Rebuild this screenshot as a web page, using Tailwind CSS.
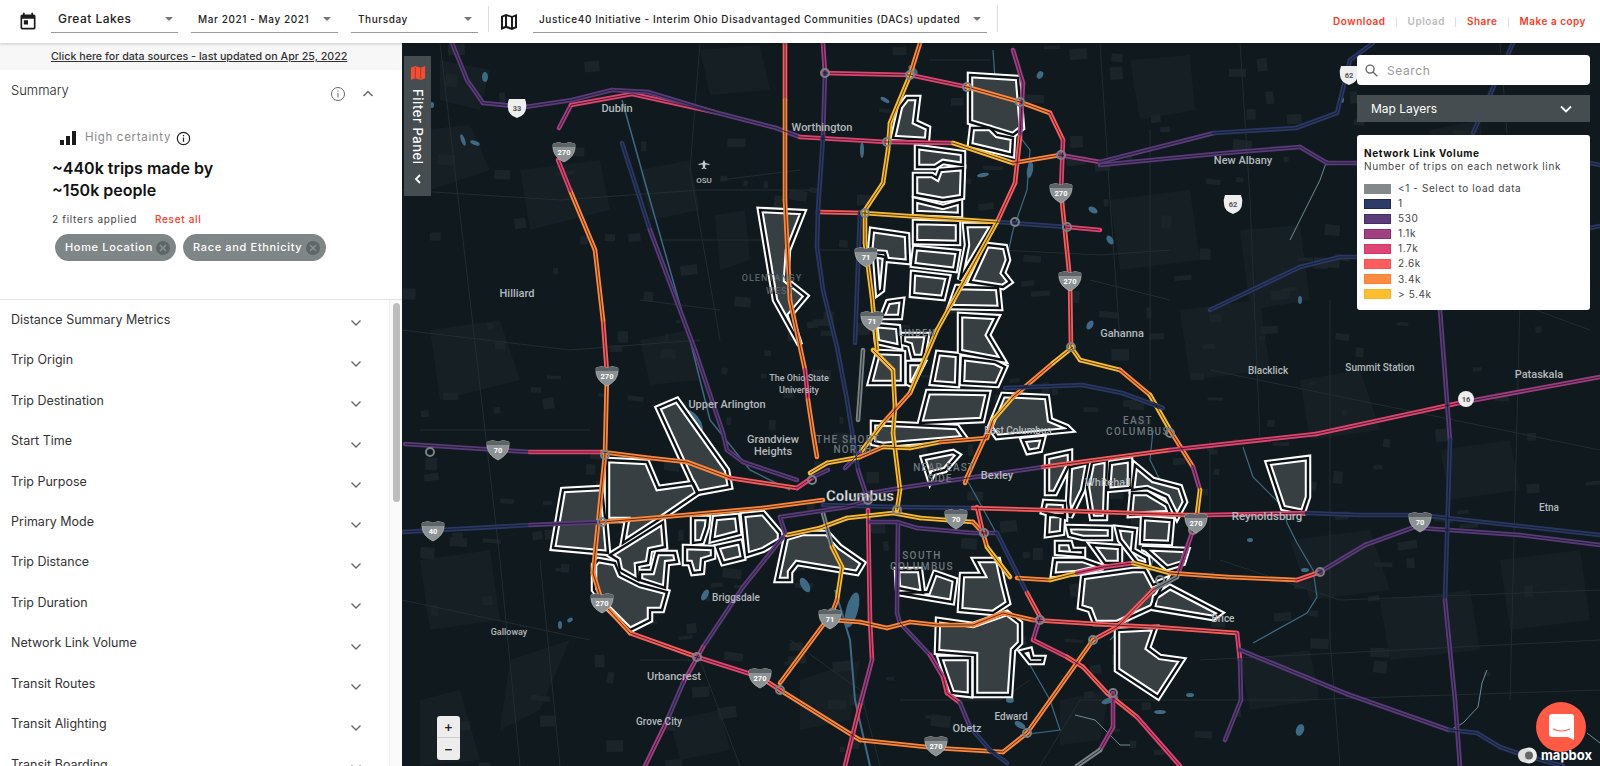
<!DOCTYPE html>
<html lang="en">
<head>
<meta charset="UTF-8">
<title>Replica</title>
<script src="https://cdn.jsdelivr.net/npm/@tailwindcss/browser@4"></script>
</head>
<body class="h-[766px] w-[1600px] overflow-hidden bg-white font-['Inter','Liberation_Sans',sans-serif] text-[#222]">
<header class="relative z-10 flex h-[43px] items-center bg-white text-[10px] font-medium tracking-[0.058em] shadow-[0_1px_3px_rgba(0,0,0,0.2)]">
  <svg class="ml-[18px] h-[20px] w-[20px]" viewBox="0 0 24 24" fill="#1a1a1a"><path d="M19 3h-1V1h-2v2H8V1H6v2H5C3.9 3 3 3.900 3 5v14c0 1.100.9 2 2 2h14c1.100 0 2-.9 2-2V5c0-1.100-.9-2-2-2zm0 16H5V8h14v11zM7 10h5v5H7z"/></svg>
  <div class="ml-[13px] flex h-[33px] w-[127px] items-center justify-between self-start border-b border-[#999] pl-[7px] pr-[5px] text-[12px] tracking-[0.04em]"><span class="mt-[6px]">Great Lakes</span><svg class="mt-[6px] h-[4px] w-[8px]" viewBox="0 0 8 4" fill="#777"><path d="M0 0h8L4 4z"/></svg></div>
  <div class="ml-[13px] flex h-[33px] w-[147px] items-center justify-between self-start border-b border-[#999] pl-[7px] pr-[7px]"><span class="mt-[6px]">Mar 2021 - May 2021</span><svg class="mt-[6px] h-[4px] w-[8px]" viewBox="0 0 8 4" fill="#777"><path d="M0 0h8L4 4z"/></svg></div>
  <div class="ml-[13px] flex h-[33px] w-[127px] items-center justify-between self-start border-b border-[#999] pl-[7px] pr-[6px]"><span class="mt-[6px]">Thursday</span><svg class="mt-[6px] h-[4px] w-[8px]" viewBox="0 0 8 4" fill="#777"><path d="M0 0h8L4 4z"/></svg></div>
  <div class="ml-[10px] mt-[6px] h-[26px] w-px self-start bg-[#ddd]"></div>
  <svg class="ml-[11px] h-[18px] w-[18px]" viewBox="0 0 18 18" fill="#1a1a1a"><path d="M1 3l5-2 6 2 5-2v14l-5 2-6-2-5 2z M5 3.500 3 4.300v9.500l2-.8z M7 3.200v9.800l4 1.400V4.600z M13 4.400v9.800l2-.8V3.700z" fill-rule="evenodd"/></svg>
  <div class="ml-[15px] flex h-[33px] w-[454px] items-center justify-between self-start border-b border-[#999] pl-[6px] pr-[6px]"><span class="mt-[6px] whitespace-nowrap">Justice40 Initiative - Interim Ohio Disadvantaged Communities (DACs) updated</span><svg class="mt-[6px] h-[4px] w-[8px]" viewBox="0 0 8 4" fill="#777"><path d="M0 0h8L4 4z"/></svg></div>
  <div class="ml-[10px] mt-[6px] h-[26px] w-px self-start bg-[#ddd]"></div>
  <div class="ml-auto mr-[14px] flex items-center text-[10px] font-semibold tracking-[0.05em] text-[#fb3a22]">
    <span>Download</span><span class="mx-[10.500px] h-[10px] w-px bg-[#ddd]"></span>
    <span class="text-[#bbb]">Upload</span><span class="mx-[10.500px] h-[10px] w-px bg-[#ddd]"></span>
    <span>Share</span><span class="mx-[10.500px] h-[10px] w-px bg-[#ddd]"></span>
    <span>Make a copy</span>
  </div>
</header>

<main class="flex h-[723px]">
  <aside class="flex h-full w-[402px] shrink-0 flex-col overflow-hidden bg-white">
    <div class="h-[27px] shrink-0 bg-[#f7f7f7] pl-[51px] pt-[6px] text-[10.700px] font-medium leading-[16px] text-[#333] underline">Click here for data sources - last updated on Apr 25, 2022</div>
    <section class="relative h-[230px] shrink-0 border-b border-[#e2e2e2]">
      <div class="flex h-[42px] items-center pl-[11px] pr-[28px] text-[13px] font-light text-[#222]">
        <span class="flex-1">Summary</span>
        <svg class="mr-[16px] mt-[6px] h-[16px] w-[16px]" viewBox="0 0 16 16" fill="none" stroke="#666" stroke-width="1"><circle cx="8" cy="8" r="6.500"/><path d="M8 7v4.500M8 4.500v1.200"/></svg>
        <svg class="mt-[6px] h-[10px] w-[12px]" viewBox="0 0 12 10" fill="none" stroke="#666" stroke-width="1.400"><path d="M1.500 7 6 2.500 10.500 7"/></svg>
      </div>
      <div class="ml-[60px] mt-[19px] flex h-[14px] items-center">
        <svg class="h-[14px] w-[16px]" viewBox="0 0 16 14" fill="#1a1a1a"><path d="M0 9h4v5H0zM6 5h4v9H6zM12 0h4v14h-4z"/></svg>
        <span class="ml-[9px] text-[11.500px] tracking-[0.06em] text-[#888]">High certainty</span>
        <svg class="ml-[5px] h-[15px] w-[15px]" viewBox="0 0 16 16" fill="none" stroke="#222" stroke-width="1.300"><circle cx="8" cy="8" r="6.600"/><path d="M8 7v4.500M8 4.300v1.400"/></svg>
      </div>
      <h2 class="ml-[52px] mt-[12px] text-[16px] font-semibold leading-[22px] text-[#111]">~440k trips made by<br>~150k people</h2>
      <div class="ml-[52px] mt-[11px] flex text-[10px] leading-[14px] tracking-[0.07em] text-[#444]">
        <span class="w-[103px]">2 filters applied</span><span class="font-medium text-[#fb3a22]">Reset all</span>
      </div>
      <div class="ml-[55px] mt-[8px] flex gap-[7px] text-[11px] font-medium tracking-[0.06em] text-white">
        <div class="flex h-[27px] w-[121px] items-center justify-between rounded-full bg-[#7f8687] pl-[10px] pr-[6px]">Home Location<span class="flex h-[14px] w-[14px] items-center justify-center rounded-full bg-[#5f6668]"><svg class="h-[8px] w-[8px]" viewBox="0 0 8 8" stroke="#8d9495" stroke-width="1.400"><path d="M1 1l6 6M7 1 1 7"/></svg></span></div>
        <div class="flex h-[27px] w-[143px] items-center justify-between rounded-full bg-[#7f8687] pl-[10px] pr-[6px]">Race and Ethnicity<span class="flex h-[14px] w-[14px] items-center justify-center rounded-full bg-[#5f6668]"><svg class="h-[8px] w-[8px]" viewBox="0 0 8 8" stroke="#8d9495" stroke-width="1.400"><path d="M1 1l6 6M7 1 1 7"/></svg></span></div>
      </div>
    </section>
    <div class="relative min-h-0 flex-1 overflow-hidden pr-[13px] text-[12.500px] text-[#333]">
      <div class="absolute bottom-0 right-0 top-0 w-[13px] border-l border-[#eee] bg-[#fafafa]"><div class="ml-[3px] mt-[3px] h-[199px] w-[7px] rounded-full bg-[#bdbdbd]"></div></div>
      <div id="rows"></div>
    </div>
  </aside>

  <div class="relative h-full flex-1 overflow-hidden bg-[#10191d]">
    <svg class="absolute inset-0 h-full w-full font-['Roboto','Liberation_Sans',sans-serif]" viewBox="402 43 1198 723">
      <defs>
        <g id="is"><path d="M-11-7Q-5-10 0-7Q5-10 11-7C12 3 6 8 0 11C-6 8-12 3-11-7Z" fill="#8c9193" stroke="#c9cccd" stroke-width=".6"/><path d="M-11-7Q-5-10 0-7Q5-10 11-7L11-4H-11Z" fill="#5d6366"/></g>
        <path id="us" d="M-8-9H8Q10-4 9 0Q9 7 0 10Q-9 7-9 0Q-10-4-8-9Z" fill="#eee"/>
      </defs>
      <g id="land"></g><g id="water"></g><g id="dac"></g><g id="roads"></g>
      <g fill="#b4babd" font-size="11" text-anchor="middle" font-weight="500">
        <text x="617" y="112">Dublin</text><text x="822" y="131">Worthington</text><text x="704" y="183" font-size="8">OSU</text>
        <path d="M704 160l1.500 3 4 1v1l-4-.5-.5 3 1.500 1v.8l-2.500-.8-2.500.8v-.8l1.500-1-.5-3-4 .5v-1l4-1z" fill="#c8cdcf"/>
        <text x="1243" y="164">New Albany</text><text x="517" y="297">Hilliard</text><text x="1122" y="337">Gahanna</text>
        <text x="1268" y="374" font-size="10">Blacklick</text><text x="1380" y="371" font-size="10">Summit Station</text><text x="1539" y="378">Pataskala</text>
        <text x="727" y="408" font-size="11">Upper Arlington</text><text x="773" y="443" font-size="11">Grandview</text><text x="773" y="455">Heights</text>
        <text x="799" y="381" font-size="9">The Ohio State</text><text x="799" y="393" font-size="9">University</text>
        <text x="772" y="281" font-size="9" letter-spacing="1" fill="#59636a">OLENTANGY</text><text x="780" y="294" font-size="9" letter-spacing="1" fill="#59636a">WEST</text>
        <text x="917" y="336" font-size="9" letter-spacing="1" fill="#7c8589">LINDEN</text>
        <text x="848" y="443" font-size="10" letter-spacing="1.200" fill="#6f787c">THE SHORT</text><text x="853" y="453" font-size="10" letter-spacing="1.200" fill="#6f787c">NORTH</text>
        <text x="944" y="471" font-size="10" letter-spacing="1" fill="#6f787c">NEAR EAST</text><text x="940" y="482" font-size="10" letter-spacing="1" fill="#6f787c">SIDE</text>
        <text x="1138" y="424" font-size="10" letter-spacing="1.400" fill="#6f787c">EAST</text><text x="1138" y="435" font-size="10" letter-spacing="1.400" fill="#6f787c">COLUMBUS</text>
        <text x="922" y="559" font-size="10" letter-spacing="1.400" fill="#6f787c">SOUTH</text><text x="922" y="570" font-size="10" letter-spacing="1.400" fill="#6f787c">COLUMBUS</text>
        <text x="860" y="501" font-size="15" font-weight="700" fill="#e3e6e7" stroke="#10191d" stroke-width=".3">Columbus</text>
        <text x="997" y="479" font-size="11">Bexley</text><text x="1018" y="434" font-size="10">East Columbus</text><text x="1108" y="486" font-size="11">Whitehall</text>
        <text x="1267" y="520" font-size="11.500">Reynoldsburg</text><text x="1549" y="511" font-size="10">Etna</text><text x="1223" y="622" font-size="10">Brice</text>
        <text x="736" y="601" font-size="10">Briggsdale</text><text x="509" y="635" font-size="9">Galloway</text><text x="674" y="680">Urbancrest</text>
        <text x="659" y="725" font-size="10">Grove City</text><text x="967" y="732" font-size="11">Obetz</text><text x="1011" y="720" font-size="10">Edward</text>
      </g>
      <g id="shields" fill="#fff" font-size="7.500" font-weight="700" text-anchor="middle">
        <use href="#us" x="517" y="108"/><text x="517" y="111" fill="#555">33</text>
        <use href="#us" x="1349" y="75"/><text x="1349" y="78" fill="#555">62</text>
        <use href="#us" x="1233" y="204"/><text x="1233" y="207" fill="#555">62</text>
        <circle cx="1466" cy="399" r="8" fill="#eee"/><text x="1466" y="402" fill="#555">16</text>
        <use href="#is" x="564" y="151"/><text x="564" y="155">270</text>
        <use href="#is" x="607" y="375"/><text x="607" y="379">270</text>
        <use href="#is" x="602" y="602"/><text x="602" y="606">270</text>
        <use href="#is" x="760" y="677"/><text x="760" y="681">270</text>
        <use href="#is" x="936" y="745"/><text x="936" y="749">270</text>
        <use href="#is" x="1061" y="192"/><text x="1061" y="196">270</text>
        <use href="#is" x="1070" y="280"/><text x="1070" y="284">270</text>
        <use href="#is" x="1196" y="522"/><text x="1196" y="526">270</text>
        <use href="#is" x="498" y="449"/><text x="498" y="453">70</text>
        <use href="#is" x="956" y="518"/><text x="956" y="522">70</text>
        <use href="#is" x="1420" y="521"/><text x="1420" y="525">70</text>
        <use href="#is" x="433" y="530"/><text x="433" y="534">40</text>
        <use href="#is" x="830" y="618"/><text x="830" y="622">71</text>
        <use href="#is" x="866" y="256"/><text x="866" y="260">71</text>
        <use href="#is" x="872" y="320"/><text x="872" y="324">71</text>
      </g>
    </svg>

    <!-- filter tab -->
    <div class="absolute left-[2px] top-[13px] flex h-[140px] w-[27px] flex-col items-center bg-[#454d50] pt-[9px] text-white">
      <svg class="h-[16px] w-[16px]" viewBox="0 0 18 18" fill="#fb4a2e"><path d="M1 3l5-2 6 2 5-2v14l-5 2-6-2-5 2z"/><path d="M6 2.500v12M12 3.500v12" stroke="#454d50" stroke-width=".8"/></svg>
      <span class="mt-[8px] text-[13px] font-medium leading-none tracking-[0.04em] [writing-mode:vertical-rl]">Filter Panel</span>
      <svg class="mt-[10px] h-[10px] w-[8px]" viewBox="0 0 8 10" fill="none" stroke="#fff" stroke-width="1.800"><path d="M6 1 2 5l4 4"/></svg>
    </div>

    <!-- right controls -->
    <div class="absolute left-[955px] top-[12px] flex w-[233px] flex-col">
      <div class="flex h-[30px] items-center rounded-[4px] bg-white pl-[8px] pt-[1px] text-[12px] tracking-[0.05em] text-[#999]">
        <svg class="mr-[9px] h-[13px] w-[13px]" viewBox="0 0 14 14" fill="none" stroke="#666" stroke-width="1.500"><circle cx="5.500" cy="5.500" r="4.300"/><path d="m8.800 8.800 4.500 4.500"/></svg>Search
      </div>
      <div class="mt-[10px] flex h-[27px] items-center justify-between bg-[#454d50] pl-[14px] pr-[18px] text-[12px] text-white">Map Layers
        <svg class="h-[8px] w-[12px]" viewBox="0 0 12 8" fill="none" stroke="#fff" stroke-width="1.800"><path d="m1 1.500 5 5 5-5"/></svg>
      </div>
      <div class="mt-[13px] h-[175px] rounded-[3px] bg-white px-[7px] pt-[12px] text-[10px] leading-[13px] tracking-[0.06em] text-[#444]">
        <div class="font-bold text-[#111]">Network Link Volume</div>
        <div class="whitespace-nowrap">Number of trips on each network link</div>
        <div class="mt-[8px] flex flex-col text-[10px] leading-[15.100px]">
          <div class="flex items-center"><span class="mr-[7px] h-[10px] w-[27px] bg-[#83898b]"></span>&lt;1 - Select to load data</div>
          <div class="flex items-center"><span class="mr-[7px] h-[10px] w-[27px] border border-[#1b2758] bg-[#2d3b66]"></span>1</div>
          <div class="flex items-center"><span class="mr-[7px] h-[10px] w-[27px] border border-[#48286f] bg-[#5c3d78]"></span>530</div>
          <div class="flex items-center"><span class="mr-[7px] h-[10px] w-[27px] border border-[#8f2c78] bg-[#a04080]"></span>1.1k</div>
          <div class="flex items-center"><span class="mr-[7px] h-[10px] w-[27px] border border-[#d9356a] bg-[#dc4674]"></span>1.7k</div>
          <div class="flex items-center"><span class="mr-[7px] h-[10px] w-[27px] border border-[#fb5054] bg-[#ff5c60]"></span>2.6k</div>
          <div class="flex items-center"><span class="mr-[7px] h-[10px] w-[27px] border border-[#fb7f35] bg-[#ff8a42]"></span>3.4k</div>
          <div class="flex items-center"><span class="mr-[7px] h-[10px] w-[27px] border border-[#fcb420] bg-[#ffbe30]"></span>&gt; 5.4k</div>
        </div>
      </div>
    </div>

    <!-- zoom -->
    <div class="absolute left-[35px] top-[673px] flex h-[44px] w-[23px] flex-col rounded-[3px] bg-[#ededed] text-center text-[14px] font-medium leading-[22px] text-[#222]">
      <span class="h-[22px] border-b border-[#ccc]">+</span><span class="h-[22px]">−</span>
    </div>

    <!-- chat and logo -->
    <div class="absolute left-[1134px] top-[659px] flex h-[50px] w-[50px] items-center justify-center rounded-full bg-[#ff5a45]">
      <svg class="h-[26px] w-[25px]" viewBox="0 0 25 26"><path d="M3 0h19q3 0 3 3v23l-6-3H3q-3 0-3-3V3q0-3 3-3z" fill="#fff"/><path d="M4 15q8 4 17 0" fill="none" stroke="#ff5a45" stroke-width="1.200"/></svg>
    </div>
    <div class="absolute left-[1116px] top-[704px] flex items-center text-[13px] font-bold leading-none text-white">
      <svg class="mr-[3px] h-[17px] w-[20px]" viewBox="0 0 20 17"><circle cx="11" cy="8.500" r="8" fill="#eee"/><circle cx="7" cy="8.500" r="7" fill="#ddd"/><circle cx="11" cy="8.500" r="4" fill="#666"/></svg>mapbox
    </div>
  </div>
</main>

<script>
  const rowNames = ["Distance Summary Metrics","Trip Origin","Trip Destination","Start Time","Trip Purpose","Primary Mode","Trip Distance","Trip Duration","Network Link Volume","Transit Routes","Transit Alighting","Transit Boarding"];
  document.getElementById("rows").innerHTML = rowNames.map(function(name) {
    return '<div class="flex h-[40.450px] items-center justify-between pl-[11px] pr-[27px]"><span>' + name + '</span><svg class="mt-[6px] h-[8px] w-[12px]" viewBox="0 0 12 8" fill="none" stroke="#666" stroke-width="1.400"><path d="m1.500 1.500 4.500 4.500 4.500-4.500"/></svg></div>';
  }).join("");

  const NS = "http://www.w3.org/2000/svg";
  function add(parent, tag, attrs) {
    const el = document.createElementNS(NS, tag);
    for (const k in attrs) el.setAttribute(k, attrs[k]);
    document.getElementById(parent).appendChild(el);
  }

  // land use blocks and minor streets
  const land = ["440,60 490,70 480,110 440,100","520,170 600,160 610,210 530,230","420,130 470,125 490,170 430,190","640,170 690,160 700,210 650,220","715,215 745,210 750,260 720,270","430,330 500,320 520,380 440,400","640,340 690,330 700,380 650,385","1130,60 1190,55 1195,110 1140,120","1110,200 1190,190 1200,260 1120,270","1240,230 1300,225 1310,300 1250,310","1180,310 1260,300 1270,370 1190,380","1300,380 1360,370 1380,430 1310,440","1440,450 1510,440 1520,490 1450,500","1290,540 1370,530 1390,590 1310,600","1380,600 1470,590 1480,650 1390,660","1240,660 1310,650 1320,700 1250,710","420,560 490,550 500,620 430,630","510,660 570,640 540,710 500,730","420,700 460,690 480,760 420,766","800,680 860,660 850,720 800,730","1060,700 1110,690 1100,740 1060,745","670,720 720,710 730,750 680,760","1500,560 1580,550 1590,620 1510,630","1430,130 1480,120 1490,200 1440,210","700,50 760,45 770,90 710,95"];
  land.forEach(function(p) { add("land", "polygon", { points: p, fill: "#161f23" }); });

  // small scattered built-up blocks, denser toward the city
  let seed = 71;
  function rnd() { seed = (seed * 16807) % 2147483647; return seed / 2147483647; }
  for (let i = 0; i < 420; i++) {
    const x = 402 + rnd() * 1198, y = 43 + rnd() * 723;
    const far = Math.hypot(x - 860, y - 420);
    if (rnd() * 700 < far - 150) continue;
    add("land", "rect", { x: x, y: y, width: 4 + rnd() * 16, height: 3 + rnd() * 10, fill: "#1b2428", transform: "rotate(" + (rnd() * 16 - 8) + " " + x + " " + y + ")" });
  }

  const streets = ["402,190 560,200 700,190 810,190","402,330 570,350 700,340","402,600 590,640","440,43 470,300 500,560 520,766","700,43 690,170 720,340","1100,43 1110,200 1120,340","1240,43 1250,200 1260,440","1330,300 1330,640 1340,766","1400,260 1590,330","1210,370 1600,450","1200,660 1600,640","1040,766 1080,700 1300,700 1600,690","640,660 700,660 740,766","1500,43 1520,300 1510,700","420,430 590,430","900,700 1000,700 1030,680","720,180 800,170","1220,560 1340,600 1600,590","790,640 860,690 880,766","1000,250 1100,255 1170,250","1090,280 1170,300","660,240 770,240","640,300 720,310","820,250 850,250","930,60 990,60","1150,130 1150,380","540,560 560,766","1210,440 1210,560"];
  streets.forEach(function(p) { add("land", "polyline", { points: p, fill: "none", stroke: "#232c30", "stroke-width": 1 }); });

  // rivers and lakes
  const rivers = [["622,100 650,200 690,340 710,420 750,470 790,490","#3f6a85",1.500],["993,50 997,107 1030,150 1027,190 1013,230 1000,290","#3f6a85",1.200],["967,480 982,507 1000,540","#3f6a85",1.200],["1153,430 1150,460 1170,500 1150,570 1130,620 1110,640","#3f6a85",1.200],["1243,447 1253,477 1283,507 1287,523 1297,543 1313,570 1317,597 1307,613 1253,643","#3f6a85",1.200],["835,590 850,640 855,700 870,766","#3f6a85",2],["1030,665 1050,700 1060,730 1020,735","#3f6a85",1.200],["1327,160 1320,180 1310,200 1290,240","#6e8b99",1],["1487,670 1482,683 1478,707 1463,723 1450,730","#6e8b99",1],["1587,733 1600,743","#6e8b99",1],["1075,715 1095,720 1120,745 1130,745","#6e8b99",1]];
  rivers.forEach(function(r) { add("water", "polyline", { points: r[0], fill: "none", stroke: r[1], "stroke-width": r[2] }); });
  const lakes = [[690,423,10,16,-40],[805,585,4,8,-30],[852,610,6,18,15],[485,77,3,5,0],[432,105,2,3,0],[463,140,2,6,-20],[475,143,5,2,20],[913,70,6,3,45],[885,100,5,2,30],[862,150,2,8,0],[983,175,6,2,-10],[1030,170,3,8,10],[1093,210,5,3,30],[1110,240,3,5,-30],[1090,325,3,5,30],[1040,75,3,4,30],[1010,700,4,3,0],[1020,725,6,3,30],[1110,700,9,3,-20],[1160,712,6,2,0],[1190,695,4,2,0],[1250,540,3,2,0],[1342,100,2,3,0],[1300,300,2,4,0],[1305,570,4,2,0],[705,595,3,6,30],[560,625,2,4,0],[570,620,3,2,-30],[642,615,2,2,0],[1300,730,4,6,20],[940,640,2,3,0],[1130,590,2,3,0]];
  lakes.forEach(function(l) { add("water", "ellipse", { cx: l[0], cy: l[1], rx: l[2], ry: l[3], fill: "#3f6a85", transform: "rotate(" + l[4] + " " + l[0] + " " + l[1] + ")" }); });

  // disadvantaged community outlines
  const dacs = ["658,408 677,400 727,470 730,487 697,493","607,460 647,462 658,488 693,483 698,493 663,517 623,543 627,520 607,520","563,490 602,488 605,518 608,553 553,548","598,560 615,563 620,575 640,585 667,592 662,610 650,610 650,620 630,630 607,607 594,590 594,565","610,555 663,522 665,547 650,550 648,563 637,565 638,580 620,570 618,560","640,572 652,572 657,553 675,553 677,562 667,563 665,588 640,580","693,518 708,518 707,527 702,542 693,543","715,518 737,516 739,533 712,540","743,515 763,513 780,533 780,540 763,550 747,555","685,547 713,548 713,557 703,560 702,572 693,573 690,563 685,563","717,547 740,542 743,558 723,563","786,538 777,580 790,580 790,572 797,563 857,573 863,563 840,547 827,533 803,533","760,210 803,212 788,250 786,280 806,296 790,315 800,345 775,300",
    "970,75 1018,78 1022,128 1013,135 990,128 970,122","972,128 990,128 997,135 1013,138 1012,155 970,145","907,98 918,98 915,122 928,128 927,140 893,138 900,107","917,147 963,153 963,165 943,162 935,167 917,167","915,175 932,175 937,178 940,170 963,168 962,197 943,200 915,195","915,200 923,202 943,207 960,202 960,215 915,213","915,222 958,223 958,243 915,242","965,225 993,225 960,280 967,245","915,248 958,252 955,270 913,265","913,273 948,277 943,298 912,295","987,245 1005,247 1008,260 1003,273 1010,282 1003,287 970,282","957,287 998,288 1000,308 950,307","872,230 907,235 908,262 887,260 885,253 870,252","875,255 885,257 882,290 878,293","888,302 902,300 900,317 882,317","875,325 898,327 900,347 877,342","903,335 927,335 923,357 913,357 910,345 903,343","878,352 903,353 903,383 870,383","908,363 923,363 912,385 908,383","938,353 958,355 957,385 932,383","963,358 995,362 1005,367 997,385 962,383","960,315 997,317 988,335 1003,360 960,352","928,392 988,393 982,420 920,423","1003,395 1047,397 1050,420 1067,427 1070,430 997,437 990,427","873,423 957,427 965,438 883,445 873,443","923,458 953,452 958,455 945,470 933,473 930,480",
    "1023,440 1043,438 1040,450 1028,452","1047,457 1070,452 1070,463 1055,493 1047,493","1070,467 1088,463 1083,490 1070,517 1068,502","1092,463 1107,460 1105,518 1092,518 1087,487","1110,463 1130,460 1130,488 1108,490","1135,465 1153,480 1180,487 1185,502 1177,517 1167,497 1147,488 1132,490","1132,493 1147,493 1167,505 1170,513 1130,515","1045,502 1065,503 1065,518 1043,512","1048,515 1063,515 1062,533 1047,535","1068,527 1110,528 1110,538 1083,538 1070,535","1117,528 1135,530 1133,550 1147,558 1148,565 1137,562 1120,540","1143,518 1172,520 1170,543 1142,542","1142,548 1187,550 1183,563 1167,568 1147,550","1057,543 1070,543 1072,550 1083,550 1083,555 1057,553","1055,560 1083,560 1103,567 1077,573 1053,575","1092,545 1120,547 1120,563 1105,563","1083,577 1133,570 1145,570 1153,585 1165,580 1152,607 1117,623 1095,623 1090,610 1080,607","1170,587 1220,613 1213,618 1153,608 1155,597","1268,463 1308,458 1308,497 1303,512 1283,508",
    "897,570 920,570 923,593 898,588","935,573 955,580 952,602 898,593 928,592","962,575 983,575 975,560 998,560 1003,583 1008,603 993,613 960,610","938,620 973,625 1007,613 1020,623 1020,643 1013,650 1010,695 975,695 975,655 937,652","940,658 970,658 970,695 952,693 945,673","1022,652 1030,650 1032,658 1043,658 1042,662 1030,662","1117,630 1155,628 1148,648 1160,657 1182,660 1167,683 1158,697 1117,670"];
  dacs.forEach(function(p) {
    add("dac", "polygon", { points: p, fill: "#373f43", stroke: "#fff", "stroke-width": 6.500, "stroke-linejoin": "miter", "stroke-miterlimit": 3 });
  });
  dacs.forEach(function(p) {
    add("dac", "polygon", { points: p, fill: "none", stroke: "#0b1114", "stroke-width": 2.400, "stroke-linejoin": "miter", "stroke-miterlimit": 3 });
  });

  // highways: one colour letter for each edge, the last one repeats
  const C = { n: "#2a3764", u: "#5a3a7a", m: "#a03d80", p: "#e0436f", r: "#fb5a5c", o: "#ff8538", y: "#fdb92e", g: "#7b8184" };
  const roads = [
    // outer belt
    ["ppoorprrooooo", "823,73 910,75 967,87 1020,102 1050,113 1063,140 1061,192 1070,280 1071,347"],
    ["yyoy", "1071,347 1080,360 1120,370 1150,395 1170,430"],
    ["omyym", "1170,430 1193,467 1200,490 1196,522 1193,530"],
    ["mgrro", "1193,530 1177,577 1153,590 1117,627 1093,640"],
    ["oooo", "1093,640 1027,733 1003,752 936,748 860,740"],
    ["orpr", "860,740 780,690 760,677 697,657 630,633"],
    ["ooor", "630,633 602,602 593,573 605,455"],
    ["oroopo", "605,455 607,373 603,320 595,250 570,190 558,160"],
    ["mppu", "559,128 571,105 632,94 714,112 776,128 800,137"],
    // crosstown
    ["pppgp", "800,137 887,142 953,143"],["yooo", "953,143 1013,163 1060,155"],["mu", "1060,155 1100,162"],
    ["unnn", "1100,162 1214,133 1296,128 1337,113 1350,60 1373,43"],
    ["u", "1100,165 1225,153 1300,147 1327,163 1360,163"],
    ["n", "1590,163 1600,165"],
    ["n", "1513,43 1473,133"],
    ["nnnn", "1210,310 1300,267 1340,257 1357,257"],
    ["n", "1590,228 1600,226"],
    ["r", "818,212 863,213"],["ynyyo", "863,213 997,222 1067,227"],["pu", "1067,227 1100,230"],
    // I-70 west and east
    ["nu", "403,532 530,525 602,522"],["oooppp", "602,522 663,517 763,508 823,500"],
    ["n", "823,505 897,507"],["nnn", "897,507 973,508"],["rrr", "973,508 1043,510 1187,515"],["rpu", "1187,515 1207,515 1307,513"],
    ["nnnn", "1307,513 1360,515 1420,515 1600,535"],["uu", "1420,528 1520,535 1600,545"],
    // north 670 line
    ["uppu", "405,444 530,452 602,452"],["oooroo", "602,452 650,458 687,462 730,478 797,488"],
    ["pu", "797,488 813,477 828,470"],["uuupr", "860,495 900,488 1043,467"],["rp", "1043,467 1170,450"],["ppmun", "1170,450 1316,434 1459,403 1600,377"],
    // Grandview, 315, north-south lines
    ["uuu", "727,450 743,462 797,480"],
    ["nuuuu", "622,143 650,230 695,350 723,433 727,450"],
    ["rooopo", "785,43 785,100 785,200 790,300 805,370 808,400 813,433 817,457"],
    ["munnnn", "823,43 825,73 823,137 818,210 817,247 823,290 837,347"],
    ["nnu", "837,347 847,400 858,470 868,500"],
    ["oyyyyyyy", "920,43 910,75 890,123 888,150 883,183 865,210 865,243 872,297 877,350"],
    ["yyyyy", "873,350 893,370 895,407 893,433 900,490 897,510"],
    ["n", "860,213 855,343"],["g", "863,350 860,393 858,420"],
    // Linden diagonal
    ["mmrrrr", "1013,50 1023,83 1020,137 1015,183 997,222"],
    ["yyoyup", "997,222 937,330 910,393 883,423 860,453 845,468"],
    // 670 east, Easton spur
    ["yyoyyo", "810,473 827,463 860,457 883,447 910,448 940,442 987,438"],
    ["oyoyy", "987,438 993,420 1013,397 1053,363 1073,347"],
    ["oop", "987,433 967,477 965,483"],
    ["nnn", "1005,388 1082,385 1122,393 1163,408"],
    // south side
    ["ppmp", "868,510 870,620 872,660 860,705 845,766"],
    ["uuumppunn", "898,523 897,613 900,623 930,655 943,677 947,693 960,703 970,727 990,750 1007,763"],
    ["gyyo", "823,513 832,547 842,567 837,600 832,613"],["oorr", "832,613 780,683"],
    ["ooooooo", "832,620 860,622 887,628 910,622 937,625 973,625 1003,613 1033,620"],
    ["rrrpuu", "1033,620 1113,625 1155,627 1237,633 1240,660"],["uu", "1240,660 1241,700 1225,740"],
    ["yyyyyoo", "787,535 820,528 847,518 893,513 920,518 973,522 983,533"],
    ["oyyoo", "983,533 987,547 1010,577"],
    ["uuuur", "870,522 897,522 917,528 973,533 997,533"],
    ["r", "977,507 983,533"],
    ["nnrmm", "997,533 1017,573 1027,593 1040,617 1033,640"],
    ["prrrpm", "1033,640 1067,657 1083,667 1107,693 1137,717 1180,766"],
    ["uu", "780,517 785,533"],["uuu", "780,517 847,507 870,500"],
    ["oyppyoor", "1017,578 1050,580 1077,573 1103,567 1133,563 1170,573 1227,577 1297,580 1320,572"],
    ["uu", "1320,572 1365,545 1420,525"],
    ["mmg", "1113,693 1113,727 1100,750 1077,766"],
    ["uuuu", "1240,650 1347,694 1449,730"],["nnnn", "1450,730 1477,733 1500,747 1523,755 1563,766"],
    ["uumum", "783,537 743,587 703,647 683,683 665,725 645,766"],
    ["u", "452,43 467,80"],["uu", "467,80 483,103 525,107 572,100 612,90 648,92 714,112"],
    ["un", "1440,310 1450,440 1445,600"],["uu", "1445,600 1455,700 1460,766"]
  ];
  roads.forEach(function(r) {
    const pts = r[1].split(" ");
    for (let i = 0; i < pts.length - 1; i++) {
      const a = pts[i].split(","), b = pts[i + 1].split(",");
      const c = r[0][Math.min(i, r[0].length - 1)];
      add("roads", "line", { x1: a[0], y1: a[1], x2: b[0], y2: b[1], stroke: C[c], "stroke-width": 4.600, "stroke-linecap": "round" });
    }
  });
  roads.forEach(function(r) {
    add("roads", "polyline", { points: r[1], fill: "none", stroke: "#10191d", "stroke-width": .9, "stroke-opacity": .85, "stroke-linejoin": "round" });
  });

  // interchanges
  const hubs = [[825,73],[910,75],[967,87],[1020,102],[1061,155],[887,142],[865,213],[1015,222],[1067,227],[1071,347],[605,455],[602,522],[1170,433],[1193,530],[1160,580],[1040,620],[1093,640],[1113,693],[1027,733],[697,657],[780,690],[832,613],[897,510],[868,500],[812,480],[984,533],[1320,572],[430,452]];
  hubs.forEach(function(h) { add("roads", "circle", { cx: h[0], cy: h[1], r: 4, fill: "none", stroke: "#7b8184", "stroke-width": 2 }); });
</script>
</body>
</html>
